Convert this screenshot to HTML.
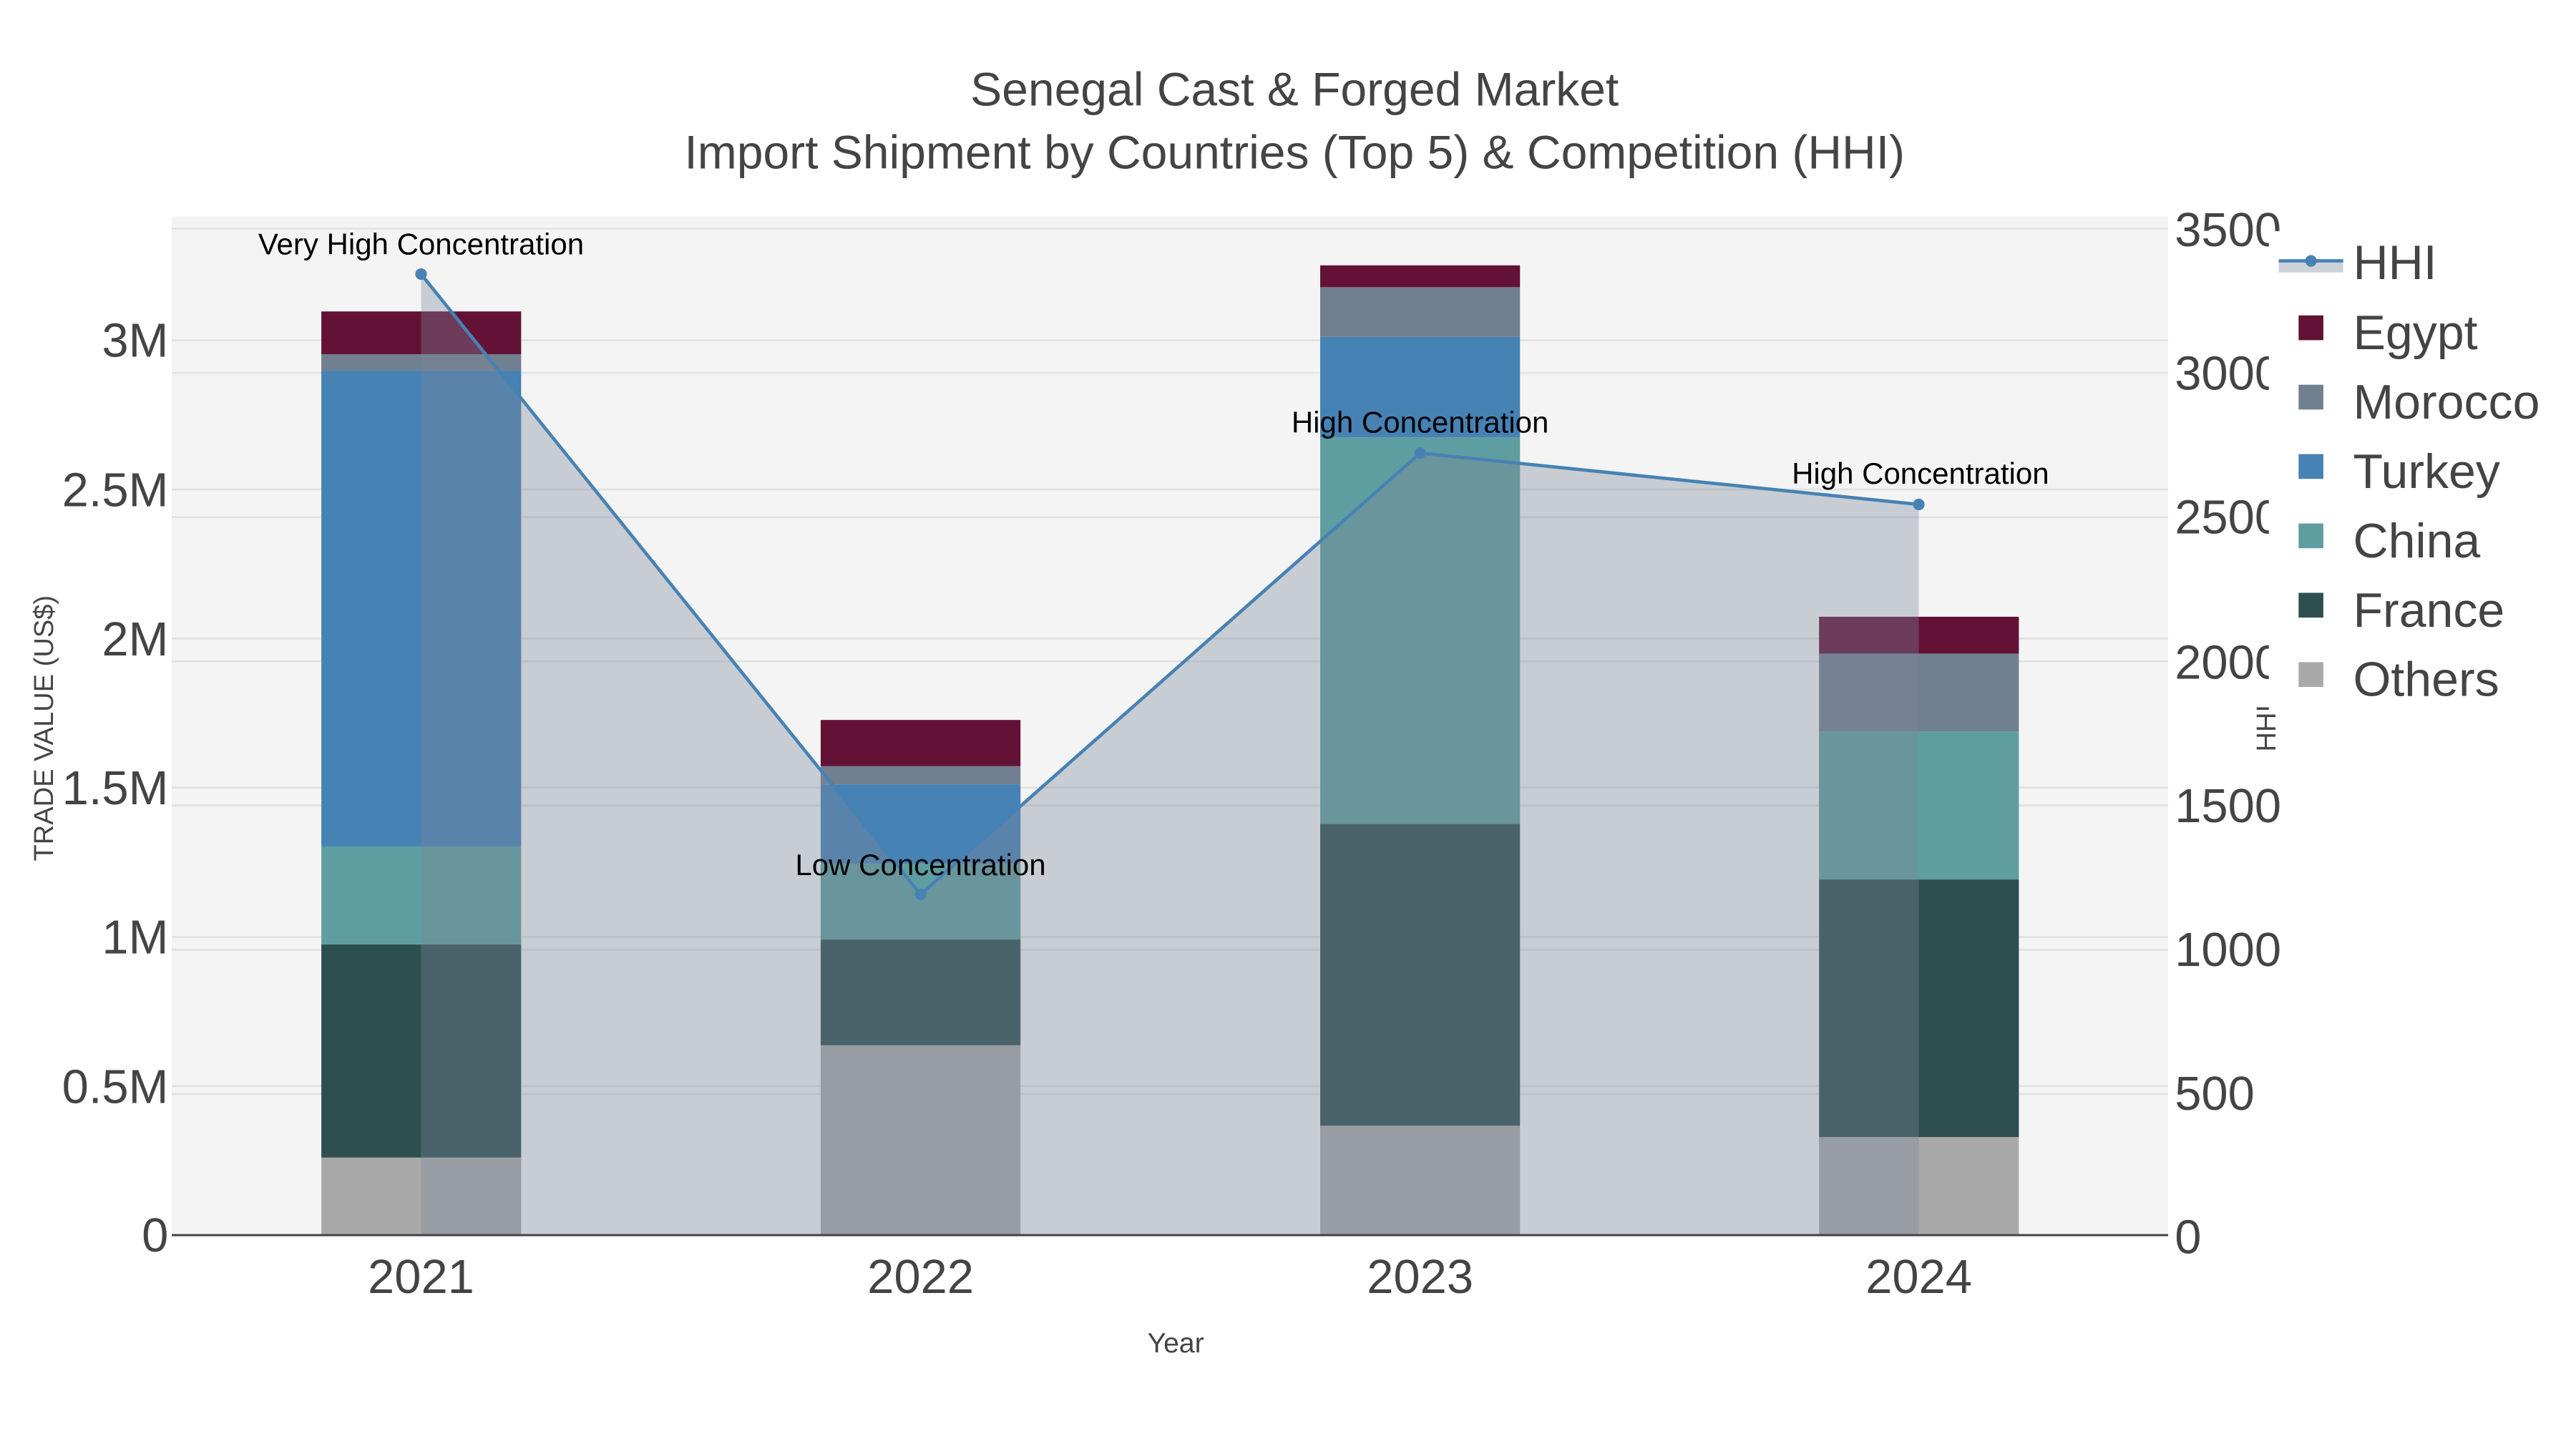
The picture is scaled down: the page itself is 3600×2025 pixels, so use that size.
<!DOCTYPE html>
<html><head><meta charset="utf-8"><style>
html,body{margin:0;padding:0;background:#fff;}
svg{display:block;font-family:"Liberation Sans",Arial,sans-serif;}
</style></head><body>
<svg width="3600" height="2025" viewBox="0 0 1560 877.5" xmlns="http://www.w3.org/2000/svg">
<rect x="0" y="0" width="1560" height="877.5" fill="#fff"/>
<rect x="104" y="131" width="1209" height="617" fill="#f4f4f4"/>
<g stroke="#e2e2e2" stroke-width="1.2">
<line x1="104" x2="1313" y1="206" y2="206"/>
<line x1="104" x2="1313" y1="296.4" y2="296.4"/>
<line x1="104" x2="1313" y1="386.7" y2="386.7"/>
<line x1="104" x2="1313" y1="477" y2="477"/>
<line x1="104" x2="1313" y1="567.4" y2="567.4"/>
<line x1="104" x2="1313" y1="657.7" y2="657.7"/>
<line x1="104" x2="1313" y1="138.5" y2="138.5"/>
<line x1="104" x2="1313" y1="225.8" y2="225.8"/>
<line x1="104" x2="1313" y1="313.2" y2="313.2"/>
<line x1="104" x2="1313" y1="400.5" y2="400.5"/>
<line x1="104" x2="1313" y1="487.8" y2="487.8"/>
<line x1="104" x2="1313" y1="575.2" y2="575.2"/>
<line x1="104" x2="1313" y1="662.5" y2="662.5"/>
</g>
<g>
<rect x="194.6" y="701" width="121" height="47" fill="#a9a9a9"/>
<rect x="194.6" y="572" width="121" height="129" fill="#2f4f4f"/>
<rect x="194.6" y="512.6" width="121" height="59.4" fill="#5f9ea0"/>
<rect x="194.6" y="224.5" width="121" height="288.1" fill="#4682b4"/>
<rect x="194.6" y="214.5" width="121" height="10" fill="#708090"/>
<rect x="194.6" y="188.6" width="121" height="25.9" fill="#631236"/>
</g>
<g>
<rect x="497" y="633" width="121" height="115" fill="#a9a9a9"/>
<rect x="497" y="569" width="121" height="64" fill="#2f4f4f"/>
<rect x="497" y="523" width="121" height="46" fill="#5f9ea0"/>
<rect x="497" y="475" width="121" height="48" fill="#4682b4"/>
<rect x="497" y="464" width="121" height="11" fill="#708090"/>
<rect x="497" y="436" width="121" height="28" fill="#631236"/>
</g>
<g>
<rect x="799.5" y="681.7" width="121" height="66.3" fill="#a9a9a9"/>
<rect x="799.5" y="499" width="121" height="182.7" fill="#2f4f4f"/>
<rect x="799.5" y="264.8" width="121" height="234.2" fill="#5f9ea0"/>
<rect x="799.5" y="204" width="121" height="60.8" fill="#4682b4"/>
<rect x="799.5" y="173.9" width="121" height="30.1" fill="#708090"/>
<rect x="799.5" y="160.7" width="121" height="13.2" fill="#631236"/>
</g>
<g>
<rect x="1101.6" y="688.6" width="121" height="59.4" fill="#a9a9a9"/>
<rect x="1101.6" y="532.6" width="121" height="156" fill="#2f4f4f"/>
<rect x="1101.6" y="443" width="121" height="89.6" fill="#5f9ea0"/>
<rect x="1101.6" y="395.8" width="121" height="47.2" fill="#708090"/>
<rect x="1101.6" y="373.5" width="121" height="22.3" fill="#631236"/>
</g>
<path d="M255 166 L557.5 541.6 L860 274.4 L1162 305.5 L1162 748 L255 748 Z" fill="rgb(123,134,153)" fill-opacity="0.365"/>
<line x1="104" x2="1313" y1="748" y2="748" stroke="#444" stroke-width="1.3"/>
<polyline points="255,166 557.5,541.6 860,274.4 1162,305.5" fill="none" stroke="#4682b4" stroke-width="2"/>
<g fill="#4682b4">
<circle cx="255" cy="166" r="3.5"/><circle cx="557.5" cy="541.6" r="3.5"/><circle cx="860" cy="274.4" r="3.5"/><circle cx="1162" cy="305.5" r="3.5"/>
</g>
<g font-size="18.2" fill="#000" text-anchor="middle">
<text x="255" y="154">Very High Concentration</text>
<text x="557.5" y="530">Low Concentration</text>
<text x="860" y="262">High Concentration</text>
<text x="1163" y="293">High Concentration</text>
</g>
<g font-size="29" fill="#444" text-anchor="end">
<text x="102" y="216">3M</text>
<text x="102" y="306.5">2.5M</text>
<text x="102" y="397">2M</text>
<text x="102" y="487">1.5M</text>
<text x="102" y="577.5">1M</text>
<text x="102" y="668">0.5M</text>
<text x="102" y="758">0</text>
</g>
<g font-size="29" fill="#444">
<text x="1317" y="149">3500</text>
<text x="1317" y="236">3000</text>
<text x="1317" y="323">2500</text>
<text x="1317" y="411">2000</text>
<text x="1317" y="498">1500</text>
<text x="1317" y="585">1000</text>
<text x="1317" y="672">500</text>
<text x="1317" y="759">0</text>
</g>
<g font-size="29" fill="#444" text-anchor="middle">
<text x="255" y="783">2021</text>
<text x="557.5" y="783">2022</text>
<text x="860" y="783">2023</text>
<text x="1162" y="783">2024</text>
</g>
<text x="712" y="819" font-size="17" fill="#444" text-anchor="middle">Year</text>
<text transform="translate(32,441) rotate(-90)" font-size="16.5" fill="#444" text-anchor="middle">TRADE VALUE (US$)</text>
<text transform="translate(1378,441) rotate(-90)" font-size="16.5" fill="#444" text-anchor="middle">HHI</text>
<g font-size="28.6" fill="#444" text-anchor="middle">
<text x="784" y="64">Senegal Cast &amp; Forged Market</text>
<text x="784" y="102">Import Shipment by Countries (Top 5) &amp; Competition (HHI)</text>
</g>
<rect x="1374" y="140" width="186" height="290" fill="#fff"/>
<rect x="1380" y="157" width="39" height="8" fill="#cdd1d8"/>
<line x1="1380" x2="1419" y1="158" y2="158" stroke="#4682b4" stroke-width="2"/>
<circle cx="1399.5" cy="158" r="3.5" fill="#4682b4"/>
<rect x="1392" y="191" width="15" height="15" fill="#631236"/>
<rect x="1392" y="233" width="15" height="15" fill="#708090"/>
<rect x="1392" y="275" width="15" height="15" fill="#4682b4"/>
<rect x="1392" y="317" width="15" height="15" fill="#5f9ea0"/>
<rect x="1392" y="359" width="15" height="15" fill="#2f4f4f"/>
<rect x="1392" y="401" width="15" height="15" fill="#a9a9a9"/>
<g font-size="29.5" fill="#444">
<text x="1425" y="169">HHI</text>
<text x="1425" y="211.5">Egypt</text>
<text x="1425" y="253.5">Morocco</text>
<text x="1425" y="295.5">Turkey</text>
<text x="1425" y="337.5">China</text>
<text x="1425" y="379.5">France</text>
<text x="1425" y="421.5">Others</text>
</g>
</svg>
</body></html>
